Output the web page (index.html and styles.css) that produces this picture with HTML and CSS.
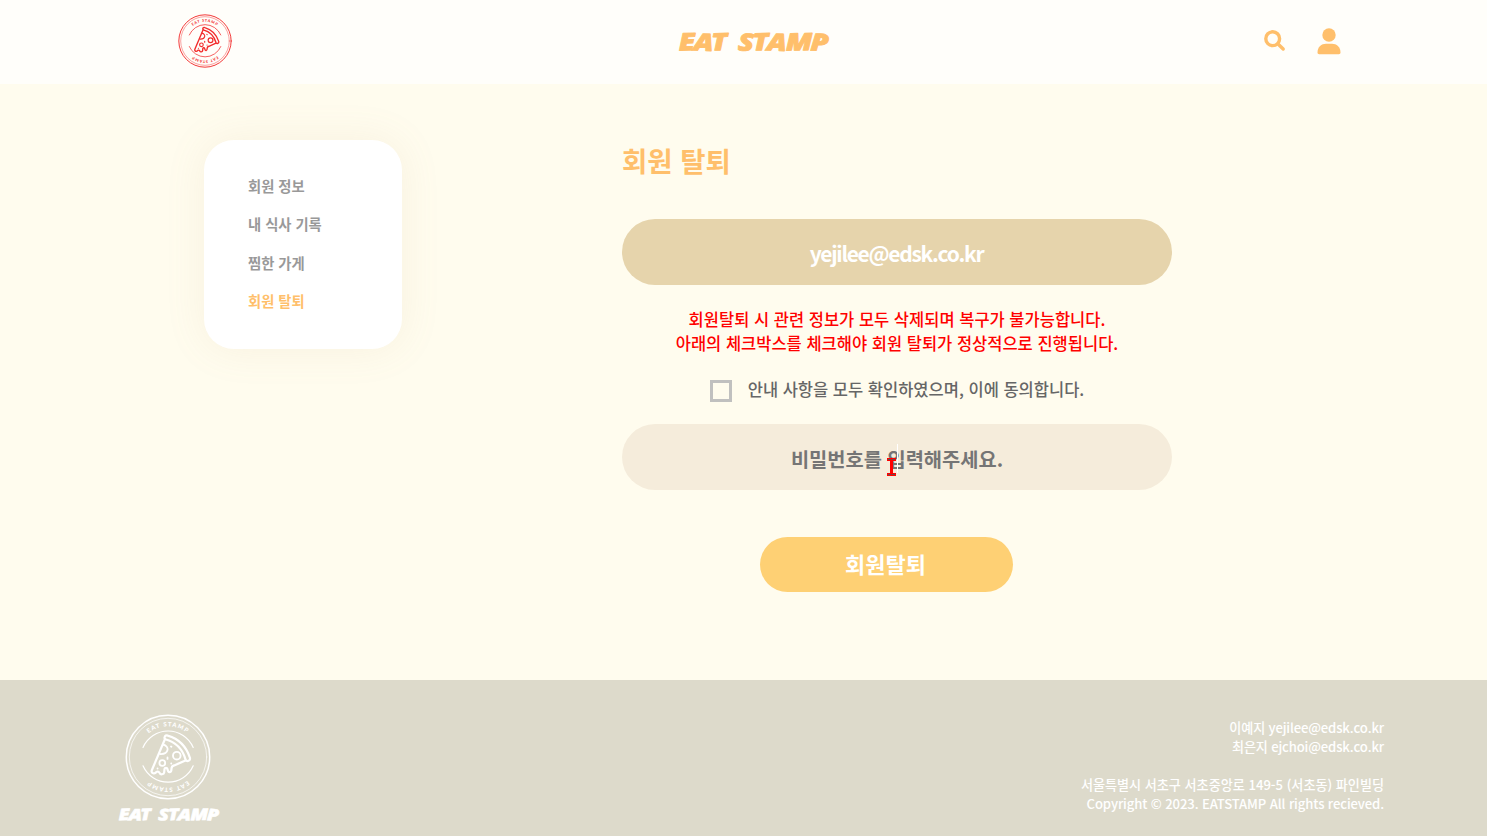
FILE: index.html
```html
<!DOCTYPE html>
<html lang="ko">
<head>
<meta charset="utf-8">
<title>EAT STAMP</title>
<link rel="stylesheet" href="styles.css">
</head>
<body>
<svg class="defs" width="0" height="0" aria-hidden="true">
  <defs>
    <path id="ring" d="M12.3 43a30.7 30.7 0 0 1 61.4 0"/>
    <symbol id="stamp" viewBox="0 0 86 86">
      <g fill="none" stroke="currentColor" stroke-linecap="round" stroke-linejoin="round">
        <circle cx="43" cy="43" r="41.7" stroke-width="1.5"/>
        <circle cx="43" cy="43" r="38.7" stroke-width=".7"/>
        <path stroke-width="1.2" d="M18 33.4a27.4 27.4 0 0 1 50.2 0M18 51.8a27.4 27.4 0 0 0 50.2 0"/>
        <path stroke-width="2.2" d="M40 25 26.7 56.5c-.7 2.8 3 4.2 4.8 1.4 1.2-.8 2.5-.2 3.2 1.2.7 1.8 4.2 1.5 4.5-.8l.3-3.3c.4-1.6 2.5-1.5 3 .1.3 2 .8 3.2 2.3 3 1.7-.2 1.7-2 1.7-3.7.2-1.7 1.1-2.7 2.7-3L60.5 46.500"/>
        <path stroke-width="2.2" d="M40.2 25.200c-1.8-2 .1-4.600 2.500-3.600C54.500 25 61.500 33 65 44c.4 2.600-2.800 4.200-4.400 1.800C57.500 34.500 51 28 40.200 25.200Z"/>
        <circle cx="51.8" cy="41.7" r="3.8" stroke-width="1.9"/>
        <circle cx="37.300" cy="49" r="2.9" stroke-width="1.8"/>
        <path stroke-width="1.800" d="M38 30.500c7 1.500 6 10-3 9.500M42.500 43.500v1.400M46.200 49.500h.1M32.500 54.500h.1M46 32.500l.4.300"/>
      </g>
      <g class="stamp-text">
        <text><textPath href="#ring" startOffset="50%">EAT STAMP</textPath></text>
        <text transform="rotate(180 43 43)"><textPath href="#ring" startOffset="50%">EAT STAMP</textPath></text>
      </g>
    </symbol>
    <symbol id="wordmark" viewBox="0 0 152 28">
      <g transform="scale(1.22 1)">
        <text y="22.500" x=".8 12.700 27.500" rotate="-2 2 -2">EAT</text>
        <text y="22.500" x="49 61.300 72.700 88.500 108.500" rotate="2 -2 2 -1 2">STAMP</text>
      </g>
    </symbol>
  </defs>
</svg>
<header class="header">
  <svg class="header-stamp"><use href="#stamp"/></svg>
  <svg class="wordmark"><use href="#wordmark"/></svg>
  <nav class="tools">
    <svg class="search" viewBox="0 0 22 22"><circle cx="8.700" cy="8.700" r="6.900"/><path d="m14 14 5.200 5"/></svg>
    <svg class="user" viewBox="0 0 24 27"><circle cx="12" cy="7" r="6.700"/><path d="M.5 24.500C.5 19 4.500 15.800 9 15.800h6c4.500 0 8.500 3.200 8.500 8.700 0 1-.7 1.700-1.700 1.700H2.200c-1 0-1.700-.7-1.700-1.700Z"/></svg>
  </nav>
</header>
<main class="main">
  <aside class="menu">
    <a>회원 정보</a>
    <a>내 식사 기록</a>
    <a>찜한 가게</a>
    <a class="active">회원 탈퇴</a>
  </aside>
  <section class="content">
    <h1 class="title">회원 탈퇴</h1>
    <div class="field email">yejilee@edsk.co.kr</div>
    <p class="warning">회원탈퇴 시 관련 정보가 모두 삭제되며 복구가 불가능합니다.<br>아래의 체크박스를 체크해야 회원 탈퇴가 정상적으로 진행됩니다.</p>
    <label class="agree"><span class="box"></span><span class="agree-text">안내 사항을 모두 확인하였으며, 이에 동의합니다.</span></label>
    <div class="field password"><span>비밀번호를 입력해주세요.</span>
      <i class="caret"></i>
      <svg class="ibeam" viewBox="0 0 9 18"><path class="ibeam-core" d="M0 0h9v3H6v12h3v3H0v-3h3V3H0Z"/><path class="ibeam-edge" d="M1 1h3v1H1ZM5 1h3v1H5ZM1 16h3v1H1ZM5 16h3v1H5Z"/></svg>
    </div>
    <button class="submit">회원탈퇴</button>
  </section>
</main>
<footer class="footer">
  <div class="brand">
    <svg class="footer-stamp"><use href="#stamp"/></svg>
    <svg class="wordmark small"><use href="#wordmark"/></svg>
  </div>
  <div class="info">
    <p class="contacts">이예지 yejilee@edsk.co.kr<br>최은지 ejchoi@edsk.co.kr</p>
    <p>서울특별시 서초구 서초중앙로 149-5 (서초동) 파인빌딩<br><span class="copyright">Copyright © 2023. EATSTAMP All rights recieved.</span></p>
  </div>
</footer>
</body>
</html>
```
FILE: styles.css
```css
* { box-sizing: border-box; }
body {
  margin: 0;
  height: 836px;
  overflow: hidden;
  display: flex;
  flex-direction: column;
  background: #fffcee;
  font-family: "Noto Sans CJK KR", "Noto Sans", sans-serif;
}
.defs { position: absolute; }
.header {
  height: 84px;
  flex: none;
  display: grid;
  grid-template-columns: 500px 152px 1fr;
  align-items: start;
  padding: 14px 146px 0 178px;
  background: #fffefa;
  color: #ffbf6b;
}
.header-stamp { width: 54px; height: 54px; color: #f22c2c; }
.wordmark { width: 152px; height: 28px; margin-top: 14px; overflow: visible; }
#wordmark { overflow: visible; }
#wordmark text {
  font: italic 800 24px "Open Sans", sans-serif;
  fill: currentColor;
  stroke: currentColor;
  stroke-width: .8;
  stroke-linejoin: round;
}
.stamp-text {
  font: 900 6px "Lato", sans-serif;
  letter-spacing: 1.1px;
  fill: currentColor;
  text-anchor: middle;
}
.tools { display: flex; justify-content: flex-end; gap: 31px; padding-top: 14px; }
.search { width: 22px; height: 22px; margin-top: 2px; fill: none; stroke: currentColor; stroke-width: 3.4; stroke-linecap: round; }
.user { width: 24px; height: 27px; fill: currentColor; }
.main { height: 596px; flex: none; display: flex; align-items: flex-start; padding: 56px 0 0 204px; }
.menu {
  width: 198px;
  height: 209px;
  padding: 27px 44px;
  border-radius: 30px;
  background: #fff;
  box-shadow: 0 0 40px rgba(190, 150, 110, .1);
  display: flex;
  flex-direction: column;
  color: #999;
  font-size: 14.300px;
  font-weight: 700;
  line-height: 38.400px;
  white-space: nowrap;
}
.menu .active { color: #ffbf6b; }
.content { width: 550px; margin-left: 220px; display: flex; flex-direction: column; }
.title { margin: 0; height: 79px; line-height: 40px; font-size: 27.500px; font-weight: 700; color: #ffbf6b; }
.field {
  position: relative;
  height: 66px;
  border-radius: 33px;
  display: flex;
  align-items: center;
  justify-content: center;
  font-weight: 700;
}
.email { background: #e6d4ac; color: #fff; font-size: 21px; letter-spacing: -1.300px; padding: 1px 1px 0 0; }
.warning { margin: 22px 0 0; text-align: center; color: #f00; font-size: 16.500px; font-weight: 500; line-height: 24px; }
.agree { display: flex; align-items: center; justify-content: center; gap: 16px; height: 24px; margin: 24px 0 21px; color: #666; font-size: 16.500px; font-weight: 500; }
.agree-text { line-height: 24px; padding-bottom: 4px; }
.box { width: 22px; height: 22px; border: 3px solid #c0c0bf; }
.password { background: #f5ecdb; color: #757575; font-size: 19.800px; padding-top: 3px; }
.caret { position: absolute; left: 275px; top: 20px; width: 1px; height: 29px; background: #fff; }
.ibeam { position: absolute; left: 265px; top: 34px; width: 9px; height: 18px; }
.ibeam-edge { fill: #555; }
.ibeam-core { fill: #f00; }
.submit {
  width: 253px;
  height: 55px;
  margin: 47px 0 0 138px;
  padding: 0 2px 3px 0;
  border: 0;
  border-radius: 28px;
  background: #fed074;
  color: #fff;
  font: 700 22px "Noto Sans CJK KR", sans-serif;
}
.footer { height: 156px; flex: none; display: flex; justify-content: space-between; padding: 34px 103px 0 118px; background: #dddacb; color: #fff; }
.brand { display: flex; flex-direction: column; align-items: center; width: 102px; }
.footer-stamp { width: 86px; height: 86px; margin-right: 3px; }
.wordmark.small { width: 102px; height: 19px; margin-top: 5px; }
.info { padding-top: 4px; text-align: right; font-size: 13.100px; font-weight: 500; line-height: 19px; }
.info p { margin: 0 0 19px; }
.contacts { letter-spacing: -.150px; }
.copyright { letter-spacing: -.120px; }
```
